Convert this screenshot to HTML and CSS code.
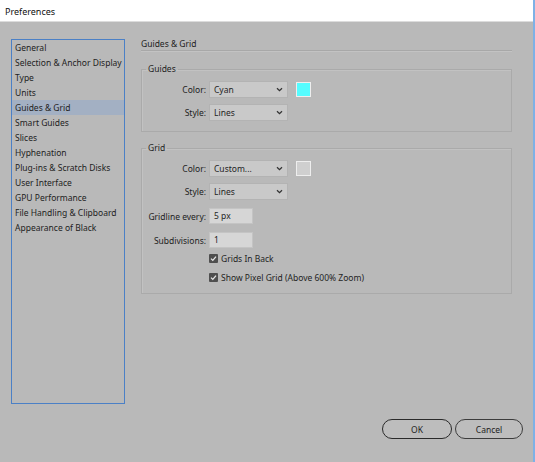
FILE: index.html
```html
<!DOCTYPE html>
<html>
<head>
<meta charset="utf-8">
<link rel="stylesheet" href="styles.css">
</head>
<body>
<div class="window">
  <div class="titlebar">Preferences</div>
  <div class="content">
    <ul class="sidebar">
      <li>General</li>
      <li>Selection &amp; Anchor Display</li>
      <li>Type</li>
      <li>Units</li>
      <li class="active">Guides &amp; Grid</li>
      <li>Smart Guides</li>
      <li>Slices</li>
      <li>Hyphenation</li>
      <li>Plug-ins &amp; Scratch Disks</li>
      <li>User Interface</li>
      <li>GPU Performance</li>
      <li>File Handling &amp; Clipboard</li>
      <li>Appearance of Black</li>
    </ul>
    <div class="main">
      <div class="main-title">Guides &amp; Grid</div>
      <fieldset class="group guides">
        <legend>Guides</legend>
        <div class="row">
          <span class="label">Color:</span>
          <div class="select">Cyan<svg class="chev" viewBox="0 0 7 5"><path d="M1 1.2 L3.5 3.6 L6 1.2" /></svg></div>
          <span class="swatch cyan"></span>
        </div>
        <div class="row">
          <span class="label">Style:</span>
          <div class="select">Lines<svg class="chev" viewBox="0 0 7 5"><path d="M1 1.2 L3.5 3.6 L6 1.2" /></svg></div>
        </div>
      </fieldset>
      <fieldset class="group grid">
        <legend>Grid</legend>
        <div class="row">
          <span class="label">Color:</span>
          <div class="select">Custom...<svg class="chev" viewBox="0 0 7 5"><path d="M1 1.2 L3.5 3.6 L6 1.2" /></svg></div>
          <span class="swatch grey"></span>
        </div>
        <div class="row">
          <span class="label">Style:</span>
          <div class="select">Lines<svg class="chev" viewBox="0 0 7 5"><path d="M1 1.2 L3.5 3.6 L6 1.2" /></svg></div>
        </div>
        <div class="row row-input">
          <span class="label">Gridline every:</span>
          <div class="input">5 px</div>
        </div>
        <div class="row row-input">
          <span class="label">Subdivisions:</span>
          <div class="input">1</div>
        </div>
        <div class="row row-check first-check">
          <span class="label"></span>
          <span class="check"><svg viewBox="0 0 9 9"><path d="M2 4.6 L3.8 6.4 L7 2.6" /></svg></span>
          <span class="check-text">Grids In Back</span>
        </div>
        <div class="row row-check">
          <span class="label"></span>
          <span class="check"><svg viewBox="0 0 9 9"><path d="M2 4.6 L3.8 6.4 L7 2.6" /></svg></span>
          <span class="check-text">Show Pixel Grid (Above 600% Zoom)</span>
        </div>
      </fieldset>
    </div>
  </div>
  <div class="footer">
    <button class="btn">OK</button>
    <button class="btn">Cancel</button>
  </div>
</div>
</body>
</html>
```
FILE: styles.css
```css
html, body {
  margin: 0;
  padding: 0;
}
body {
  width: 535px;
  height: 462px;
  overflow: hidden;
  background: #b9b9b9;
  font-family: "Noto Sans", "Open Sans", sans-serif;
  font-size: 8.5px;
  color: #1f1f1f;
}
.window {
  width: 533px;
  height: 462px;
  border-right: 2px solid #7eb1e6;
  background: #b9b9b9;
  display: flex;
  flex-direction: column;
}
.titlebar {
  height: 22px;
  box-sizing: border-box;
  background: #fff;
  border-bottom: 1px solid #dcdcdc;
  padding: 5px 0 0 5px;
  font-size: 9px;
  color: #111;
}
.content {
  display: flex;
  padding: 17px 0 0 11px;
  gap: 16px;
}
.sidebar {
  list-style: none;
  margin: 0;
  padding: 0;
  width: 112px;
  height: 363px;
  border: 1px solid #4b80c6;
  flex: none;
}
.sidebar li {
  height: 15px;
  line-height: 15px;
  padding-left: 3px;
  white-space: nowrap;
  color: #222;
}
.sidebar li.active {
  background: #a3b0c3;
}
.main {
  width: 371px;
  display: flex;
  flex-direction: column;
}
.main-title {
  height: 11px;
  line-height: 10px;
  border-bottom: 1px solid #a8a8a8;
  box-shadow: 0 1px 0 #c3c3c3;
  padding-bottom: 0;
  margin-bottom: 12px;
  color: #222;
}
.group {
  margin: 0;
  padding: 0;
  border: 1px solid #aaaaaa;
  box-shadow: inset 1px 1px 0 #c2c2c2;
  min-width: 0;
}
.group legend {
  padding: 0 2px;
  margin-left: 4px;
  line-height: 12px;
  color: #222;
}
.guides {
  padding-bottom: 10px;
  margin-bottom: 10px;
}
.grid {
  padding-bottom: 10px;
}
.row {
  display: flex;
  align-items: center;
  height: 17px;
  margin-top: 6px;
}
.label {
  width: 64px;
  text-align: right;
  padding-right: 3px;
  flex: none;
  color: #222;
}
.select {
  width: 79px;
  height: 17px;
  box-sizing: border-box;
  background: #c9c9c9;
  border: 1px solid #b3b3b3;
  padding-left: 4px;
  line-height: 15px;
  display: flex;
  align-items: center;
  justify-content: space-between;
  padding-right: 4px;
}
.chev {
  width: 7px;
  height: 5px;
  fill: none;
  stroke: #333;
  stroke-width: 1.3;
}
.swatch {
  width: 15px;
  height: 15px;
  box-sizing: border-box;
  border: 1px solid #eeeeee;
  margin-left: 8px;
}
.swatch.cyan {
  background: #55fcff;
}
.swatch.grey {
  background: #cfcfcf;
}
.row-input {
  height: 16px;
  margin-top: 8px;
}
.input {
  width: 44px;
  height: 16px;
  box-sizing: border-box;
  background: #d6d6d6;
  border: 1px solid #c4c4c4;
  padding-left: 4px;
  line-height: 14px;
}
.row-check {
  height: 12px;
  margin-top: 7px;
}
.first-check {
  margin-top: 4px;
}
.check {
  width: 9px;
  height: 9px;
  background: #4f4f4f;
  border-radius: 1px;
  margin-left: 0;
  margin-right: 3px;
  display: flex;
}
.check svg {
  width: 9px;
  height: 9px;
  fill: none;
  stroke: #e8e8e8;
  stroke-width: 1.3;
}
.footer {
  display: flex;
  justify-content: flex-end;
  gap: 3px;
  padding: 0 10px 0 0;
  margin-top: 15px;
}
.btn {
  width: 70px;
  height: 20px;
  border: 1.5px solid #2a2a2a;
  border-radius: 10px;
  background: #bdbdbd;
  font-family: "Noto Sans", "Open Sans", sans-serif;
  font-size: 8.5px;
  color: #222;
  padding: 0;
}
.btn + .btn {
  width: 68px;
  border-color: #3c3c3c;
}
```
